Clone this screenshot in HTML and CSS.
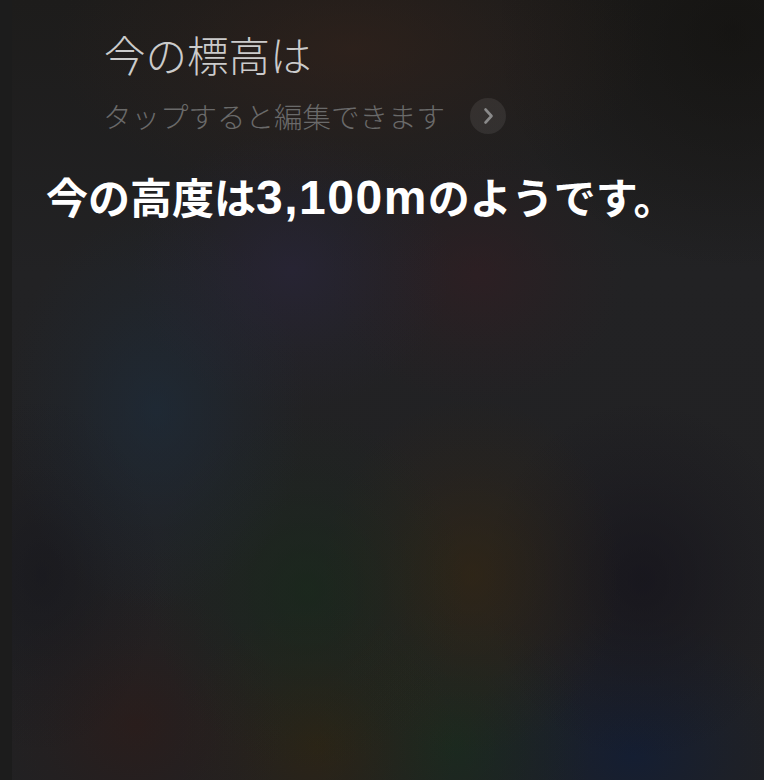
FILE: index.html
```html
<!DOCTYPE html>
<html lang="ja">
<head>
<meta charset="utf-8">
<link rel="stylesheet" href="styles.css">
</head>
<body>
<div class="screen">
  <div class="edge"></div>
  <div class="main">
    <div class="query">
      <div class="query-title">今の標高は</div>
      <div class="query-edit">
        <span class="edit-label">タップすると編集できます</span>
        <span class="chev">
          <svg width="36" height="36" viewBox="0 0 36 36"><path d="M15.5 11.5 L21.5 18 L15.5 24.5" fill="none" stroke="#8a8a8a" stroke-width="2.6" stroke-linecap="round" stroke-linejoin="round"/></svg>
        </span>
      </div>
    </div>
    <div class="answer">今の高度は<span class="num">3,100m</span>のようです。</div>
  </div>
</div>
</body>
</html>
```
FILE: styles.css
```css
html, body {
  margin: 0;
  padding: 0;
}
body {
  width: 764px;
  height: 780px;
  overflow: hidden;
  background: #212123;
  font-family: "Noto Sans CJK JP", "Noto Sans", sans-serif;
}
.screen {
  display: flex;
  width: 764px;
  height: 780px;
}
.edge {
  width: 12px;
  background: #1c1c1c;
  flex: none;
}
.main {
  flex: 1;
  background:
    radial-gradient(ellipse 300px 150px at 340px 50px, rgba(58,36,26,0.5), rgba(58,36,26,0.16) 60%, transparent),
    radial-gradient(ellipse 240px 240px at 720px 30px, rgba(14,13,10,0.5), transparent),
    radial-gradient(ellipse 160px 140px at 280px 270px, rgba(44,38,66,0.5), rgba(44,38,66,0.15) 60%, transparent),
    radial-gradient(ellipse 150px 130px at 465px 275px, rgba(54,28,34,0.5), rgba(54,28,34,0.15) 60%, transparent),
    radial-gradient(ellipse 150px 200px at 144px 410px, rgba(28,48,68,0.5), rgba(28,48,68,0.16) 60%, transparent),
    radial-gradient(ellipse 160px 180px at 295px 590px, rgba(22,44,24,0.55), rgba(22,44,24,0.17) 60%, transparent),
    radial-gradient(ellipse 150px 180px at 460px 575px, rgba(56,40,14,0.55), rgba(56,40,14,0.17) 60%, transparent),
    radial-gradient(ellipse 160px 180px at 630px 580px, rgba(18,16,26,0.6), rgba(18,16,26,0.2) 60%, transparent),
    radial-gradient(ellipse 120px 180px at 30px 575px, rgba(18,18,26,0.45), rgba(18,18,26,0.14) 60%, transparent),
    radial-gradient(ellipse 150px 140px at 124px 725px, rgba(48,26,22,0.55), rgba(48,26,22,0.17) 60%, transparent),
    radial-gradient(ellipse 140px 140px at 305px 745px, rgba(52,38,12,0.55), rgba(52,38,12,0.17) 60%, transparent),
    radial-gradient(ellipse 140px 140px at 441px 745px, rgba(22,48,28,0.55), rgba(22,48,28,0.17) 60%, transparent),
    radial-gradient(ellipse 170px 140px at 621px 755px, rgba(12,28,60,0.6), rgba(12,28,60,0.2) 60%, transparent),
    linear-gradient(180deg, #1d1c1b 0%, #222224 35%, #212123 100%);
}
.query {
  padding: 25px 0 0 92px;
  display: flex;
  flex-direction: column;
}
.query-title {
  font-size: 41.5px;
  font-weight: 300;
  line-height: 58px;
  color: #cbcbcb;
}
.query-edit {
  display: flex;
  align-items: center;
  gap: 25px;
  height: 46px;
  margin-top: 10px;
}
.edit-label {
  font-size: 28.5px;
  font-weight: 300;
  color: #6a6a6a;
  line-height: 36px;
  margin-left: -1px;
}
.chev {
  width: 36px;
  height: 36px;
  border-radius: 50%;
  background: rgba(255,255,255,0.08);
  display: flex;
}
.answer {
  margin: 32px 0 0 34px;
  font-size: 42px;
  font-weight: 700;
  line-height: 50px;
  color: #ffffff;
  white-space: nowrap;
}
.num {
  font-family: "Liberation Sans", "Noto Sans", sans-serif;
  font-size: 48px;
  letter-spacing: 1.5px;
}
```
